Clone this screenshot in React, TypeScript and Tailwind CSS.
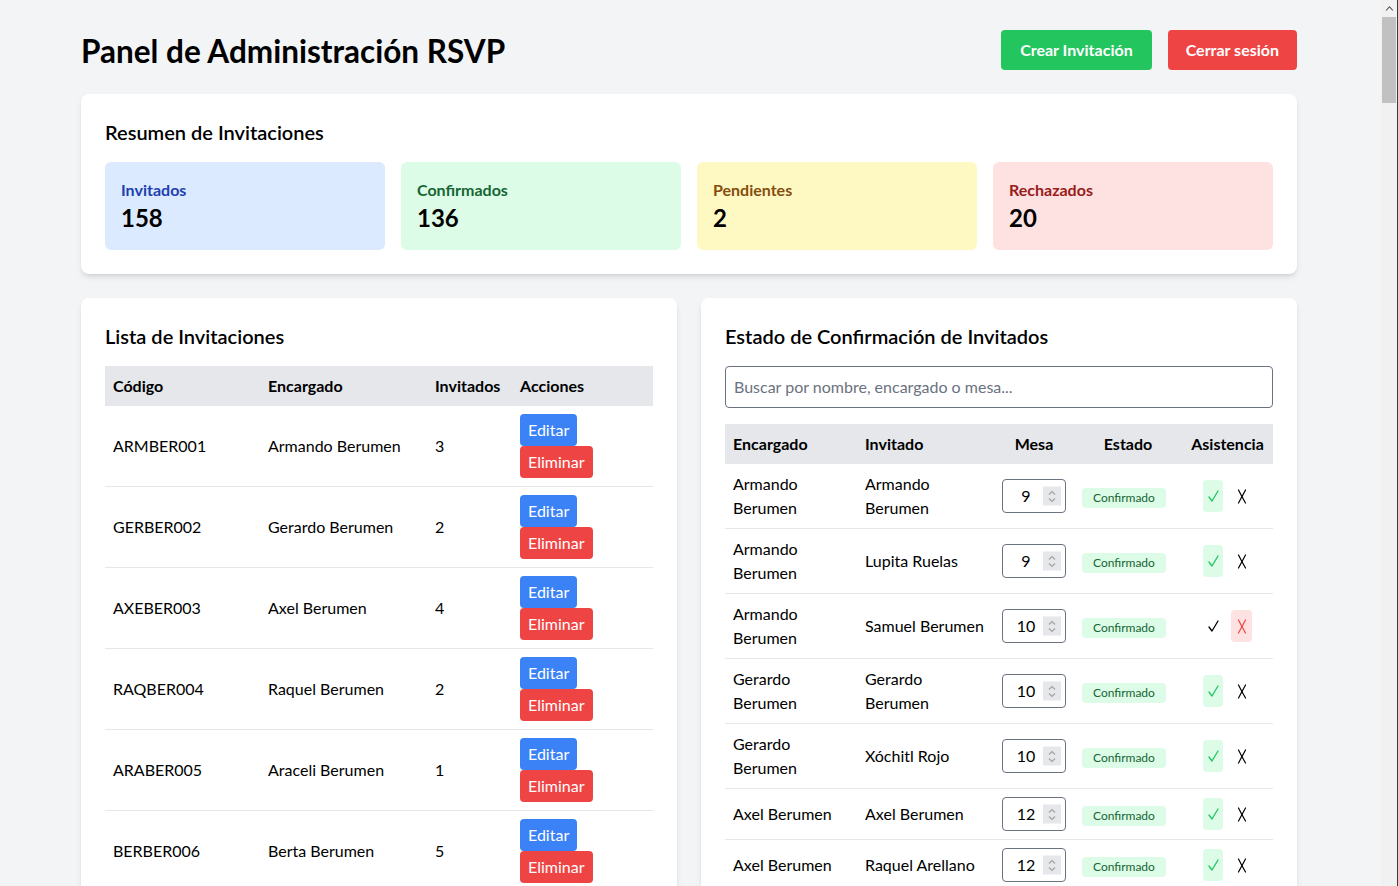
import React from "react";

const invitaciones = [
  { codigo: "ARMBER001", encargado: "Armando Berumen", invitados: 3 },
  { codigo: "GERBER002", encargado: "Gerardo Berumen", invitados: 2 },
  { codigo: "AXEBER003", encargado: "Axel Berumen", invitados: 4 },
  { codigo: "RAQBER004", encargado: "Raquel Berumen", invitados: 2 },
  { codigo: "ARABER005", encargado: "Araceli Berumen", invitados: 1 },
  { codigo: "BERBER006", encargado: "Berta Berumen", invitados: 5 },
  { codigo: "JUABER007", encargado: "Juan Berumen", invitados: 3 },
];

const invitados = [
  { encargado: "Armando Berumen", invitado: "Armando Berumen", mesa: 9, asist: true },
  { encargado: "Armando Berumen", invitado: "Lupita Ruelas", mesa: 9, asist: true },
  { encargado: "Armando Berumen", invitado: "Samuel Berumen", mesa: 10, asist: false },
  { encargado: "Gerardo Berumen", invitado: "Gerardo Berumen", mesa: 10, asist: true },
  { encargado: "Gerardo Berumen", invitado: "Xóchitl Rojo", mesa: 10, asist: true },
  { encargado: "Axel Berumen", invitado: "Axel Berumen", mesa: 12, asist: true },
  { encargado: "Axel Berumen", invitado: "Raquel Arellano", mesa: 12, asist: true },
  { encargado: "Axel Berumen", invitado: "Sofía Berumen", mesa: 12, asist: true },
];

function Spinner() {
  return (
    <div className="pointer-events-none absolute right-[5px] top-1/2 -translate-y-1/2 w-[18px] h-[19px] bg-[#e5e7eb] flex items-center justify-center">
      <svg width="10" height="14" viewBox="0 0 10 14" fill="none" stroke="#a3a3a3" strokeWidth="1.2">
        <path d="M2 5 L5 2 L8 5" />
        <path d="M2 9 L5 12 L8 9" />
      </svg>
    </div>
  );
}

function CheckIcon() {
  return (
    <svg width="11" height="12" viewBox="0 0 11 12" fill="none" stroke="currentColor" strokeWidth="1.3" strokeLinecap="round" strokeLinejoin="round">
      <path d="M1 7 L4 11 L10 1" />
    </svg>
  );
}

function XIcon() {
  return (
    <svg width="10" height="15" viewBox="0 0 10 15" fill="none" stroke="currentColor" strokeWidth="1.2" strokeLinecap="round">
      <path d="M1.5 1 Q4.5 7 8.5 14" />
      <path d="M8.5 1 Q5 7.5 1.5 14" />
    </svg>
  );
}

function FakeScrollbar() {
  return (
    <div className="w-[17px] shrink-0 bg-[#f1f1f1] flex flex-col items-center border-r border-[#3a3a3a]">
      <div className="h-[15px] w-full flex items-center justify-center">
        <svg width="9" height="6" viewBox="0 0 9 6" fill="#505050">
          <path d="M0.5 5.5 L4.5 1 L8.5 5.5 L7.2 5.5 L4.5 2.6 L1.8 5.5 Z" />
        </svg>
      </div>
      <div className="mt-[2px] w-[14px] h-[86px] bg-[#c1c1c1]" />
    </div>
  );
}

export default function App() {
  return (
    <div className="h-screen flex bg-[#f3f4f6] font-['Lato',sans-serif] text-black">
      <div className="flex-1 min-w-0 overflow-y-auto pr-[3px]">
        <div className="max-w-7xl mx-auto px-8 pt-[30px] pb-8">
          <div className="flex items-center justify-between mb-6">
            <h1 className="text-[31.5px] leading-9 font-bold pt-px">Panel de Administración RSVP</h1>
            <div className="flex gap-4">
              <button className="bg-[#22c55e] text-white font-bold px-[19px] py-2 rounded">
                Crear Invitación
              </button>
              <button className="bg-[#ef4444] text-white font-bold px-[18px] py-2 rounded">
                Cerrar sesión
              </button>
            </div>
          </div>

          <div className="bg-white rounded-lg shadow-md p-6 mb-6">
            <h2 className="text-xl font-semibold mb-4">Resumen de Invitaciones</h2>
            <div className="grid grid-cols-4 gap-4">
              <div className="bg-[#dbeafe] rounded-md p-4">
                <p className="font-bold text-[#1e40af]">Invitados</p>
                <p className="text-2xl font-bold">158</p>
              </div>
              <div className="bg-[#dcfce7] rounded-md p-4">
                <p className="font-bold text-[#166534]">Confirmados</p>
                <p className="text-2xl font-bold">136</p>
              </div>
              <div className="bg-[#fef9c3] rounded-md p-4">
                <p className="font-bold text-[#854d0e]">Pendientes</p>
                <p className="text-2xl font-bold">2</p>
              </div>
              <div className="bg-[#fee2e2] rounded-md p-4">
                <p className="font-bold text-[#991b1b]">Rechazados</p>
                <p className="text-2xl font-bold">20</p>
              </div>
            </div>
          </div>

          <div className="grid grid-cols-2 gap-6 items-start">
            <div className="bg-white rounded-lg shadow-md p-6">
              <h2 className="text-xl font-semibold mb-4">Lista de Invitaciones</h2>
              <table className="w-full table-fixed border-collapse text-left">
                <colgroup>
                  <col className="w-[155px]" />
                  <col className="w-[167px]" />
                  <col className="w-[85px]" />
                  <col className="w-[141px]" />
                </colgroup>
                <thead>
                  <tr className="bg-[#e5e7eb]">
                    <th className="px-2 py-2 font-bold">Código</th>
                    <th className="px-2 py-2 font-bold">Encargado</th>
                    <th className="px-2 py-2 font-bold">Invitados</th>
                    <th className="px-2 py-2 font-bold">Acciones</th>
                  </tr>
                </thead>
                <tbody>
                  {invitaciones.map((r) => (
                    <tr key={r.codigo} className="border-b border-[#e5e7eb]">
                      <td className="px-2 py-2">{r.codigo}</td>
                      <td className="px-2 py-2">{r.encargado}</td>
                      <td className="px-2 py-2">{r.invitados}</td>
                      <td className="px-2 py-2">
                        <div className="flex flex-col items-start">
                          <button className="bg-[#3b82f6] text-white px-2 py-1 rounded">Editar</button>
                          <button className="bg-[#ef4444] text-white px-2 py-1 rounded">Eliminar</button>
                        </div>
                      </td>
                    </tr>
                  ))}
                </tbody>
              </table>
            </div>

            <div className="bg-white rounded-lg shadow-md p-6">
              <h2 className="text-xl font-semibold mb-4">Estado de Confirmación de Invitados</h2>
              <input
                type="text"
                placeholder="Buscar por nombre, encargado o mesa..."
                className="w-full border border-[#6b7280] rounded px-2 py-2 mb-4 placeholder:text-[#6b7280]"
              />
              <table className="w-full table-fixed border-collapse text-left">
                <colgroup>
                  <col className="w-[132px]" />
                  <col className="w-[137px]" />
                  <col className="w-[80px]" />
                  <col className="w-[108px]" />
                  <col className="w-[91px]" />
                </colgroup>
                <thead>
                  <tr className="bg-[#e5e7eb]">
                    <th className="px-2 py-2 font-bold">Encargado</th>
                    <th className="px-2 py-2 font-bold">Invitado</th>
                    <th className="px-2 py-2 font-bold text-center">Mesa</th>
                    <th className="px-2 py-2 font-bold text-center">Estado</th>
                    <th className="px-2 py-2 font-bold text-center">Asistencia</th>
                  </tr>
                </thead>
                <tbody>
                  {invitados.map((r, i) => (
                    <tr key={i} className="border-b border-[#e5e7eb]">
                      <td className="px-2 py-2">{r.encargado}</td>
                      <td className="px-2 py-2">{r.invitado}</td>
                      <td className="px-2 py-2">
                        <div className="relative w-16">
                          <input
                            type="number"
                            defaultValue={r.mesa}
                            className="w-16 border border-[#6b7280] rounded pl-2 pr-6 py-1 text-center [appearance:textfield] [&::-webkit-inner-spin-button]:appearance-none"
                          />
                          <Spinner />
                        </div>
                      </td>
                      <td className="px-2 py-2">
                        <span className="inline-block bg-[#dcfce7] text-[#166534] text-xs px-[11px] py-0.5 rounded">
                          Confirmado
                        </span>
                      </td>
                      <td className="px-2 py-2 text-center">
                        <div className="inline-flex gap-2 align-middle">
                          <button
                            className={
                              r.asist
                                ? "w-5 h-8 flex items-center justify-center rounded bg-[#dcfce7] text-[#22c55e]"
                                : "w-5 h-8 flex items-center justify-center rounded text-black"
                            }
                          >
                            <CheckIcon />
                          </button>
                          <button
                            className={
                              !r.asist
                                ? "w-[21px] h-8 flex items-center justify-center rounded bg-[#fee2e2] text-[#ef4444]"
                                : "w-[21px] h-8 flex items-center justify-center rounded text-black"
                            }
                          >
                            <XIcon />
                          </button>
                        </div>
                      </td>
                    </tr>
                  ))}
                </tbody>
              </table>
            </div>
          </div>
        </div>
      </div>
      <FakeScrollbar />
    </div>
  );
}
